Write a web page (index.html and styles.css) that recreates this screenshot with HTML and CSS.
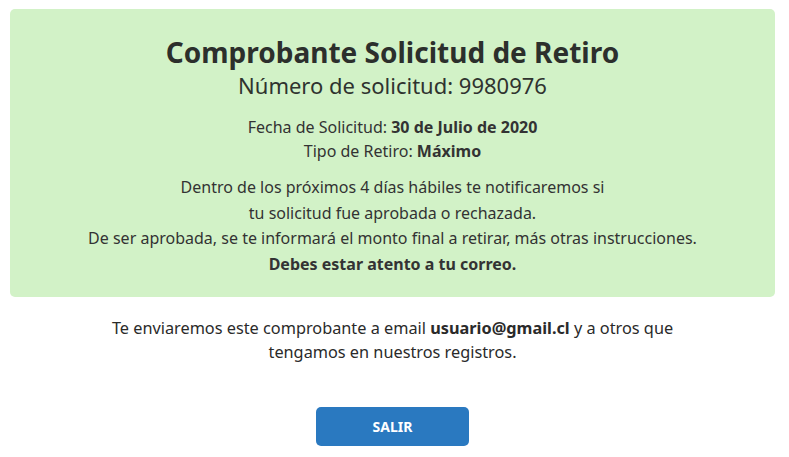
FILE: index.html
```html
<!DOCTYPE html>
<html lang="es">
<head>
<meta charset="utf-8">
<link rel="stylesheet" href="styles.css">
</head>
<body>
<main class="page">
  <section class="card">
    <h1 class="title">Comprobante Solicitud de Retiro</h1>
    <h2 class="subtitle">Número de solicitud: 9980976</h2>
    <div class="meta">
      <p>Fecha de Solicitud: <strong>30 de Julio de 2020</strong></p>
      <p>Tipo de Retiro: <strong>Máximo</strong></p>
    </div>
    <div class="info">
      <p>Dentro de los próximos 4 días hábiles te notificaremos si</p>
      <p>tu solicitud fue aprobada o rechazada.</p>
      <p>De ser aprobada, se te informará el monto final a retirar, más otras instrucciones.</p>
      <p><strong>Debes estar atento a tu correo.</strong></p>
    </div>
  </section>
  <p class="notice">Te enviaremos este comprobante a email <strong>usuario@gmail.cl</strong> y a otros que<br>tengamos en nuestros registros.</p>
  <div class="actions">
    <button class="btn" type="button">SALIR</button>
  </div>
</main>
</body>
</html>
```
FILE: styles.css
```css
* { box-sizing: border-box; }
html, body { margin: 0; padding: 0; background: #ffffff; }
body {
  font-family: "Noto Sans", "Open Sans", sans-serif;
  color: #333333;
}
.page {
  width: 765px;
  margin: 9px 0 0 10px;
  display: flex;
  flex-direction: column;
  align-items: stretch;
}
.card {
  background: #d2f2c7;
  border-radius: 5px;
  padding: 26px 10px 20px;
  text-align: center;
}
.title {
  margin: 0;
  font-size: 28px;
  line-height: 34px;
  font-weight: 700;
  color: #2c2f2c;
}
.subtitle {
  margin: 1px 0 0;
  font-size: 22px;
  line-height: 30px;
  font-weight: 400;
  color: #2f332f;
}
.meta {
  margin-top: 15px;
  font-size: 16px;
  line-height: 24px;
}
.meta p, .info p { margin: 0; }
.info {
  margin-top: 12px;
  font-size: 16px;
  line-height: 25.5px;
}
strong { font-weight: 700; }
.notice {
  margin: 19px 0 0;
  text-align: center;
  font-size: 16.3px;
  line-height: 24px;
  color: #2a2a2a;
}
.actions {
  display: flex;
  justify-content: center;
  margin-top: 43px;
}
.btn {
  width: 153px;
  height: 39px;
  border: none;
  border-radius: 5px;
  background: #2a79c0;
  color: #ffffff;
  font-family: "Noto Sans", sans-serif;
  font-size: 14px;
  font-weight: 700;
  cursor: pointer;
}
```
